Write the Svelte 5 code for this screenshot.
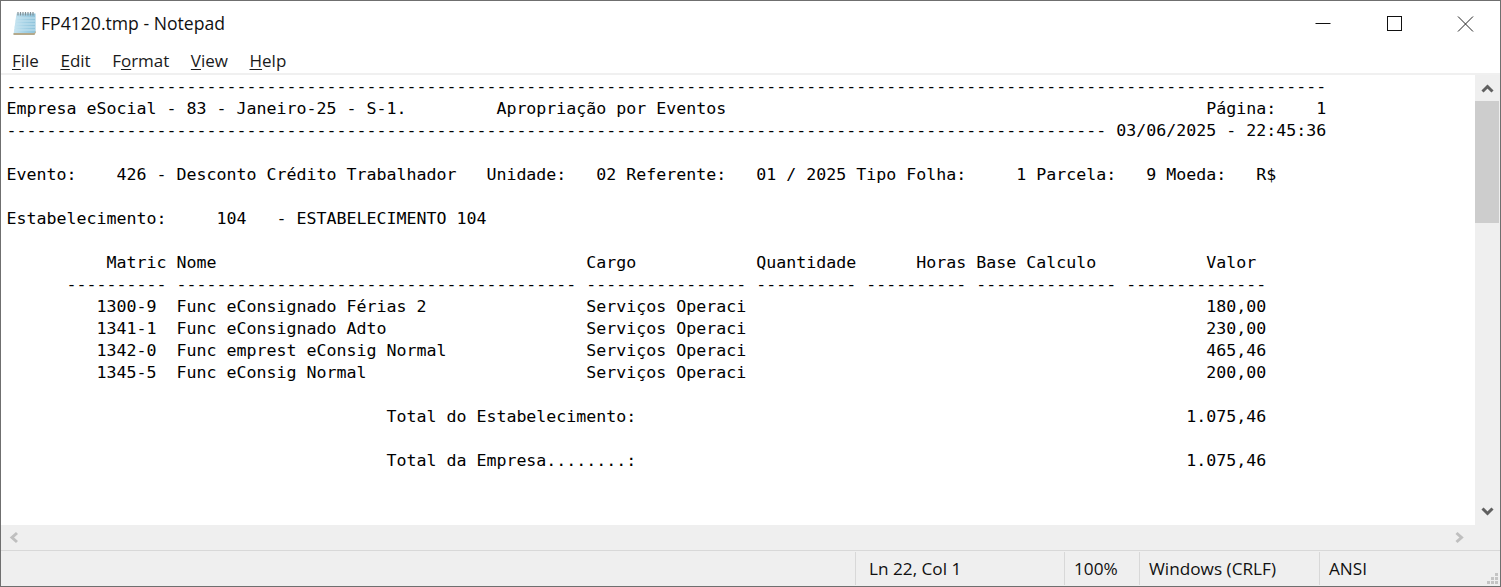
<script>
  const rep = (n) => '-'.repeat(n);
  const lines = [
    rep(132),
    'Empresa eSocial - 83 - Janeiro-25 - S-1.' + ' '.repeat(9) + 'Apropriação por Eventos' + ' '.repeat(48) + 'Página:    1',
    rep(110) + ' 03/06/2025 - 22:45:36',
    '',
    'Evento:    426 - Desconto Crédito Trabalhador   Unidade:   02 Referente:   01 / 2025 Tipo Folha:     1 Parcela:   9 Moeda:   R$',
    '',
    'Estabelecimento:     104   - ESTABELECIMENTO 104',
    '',
    '          Matric Nome' + ' '.repeat(37) + 'Cargo' + ' '.repeat(12) + 'Quantidade' + ' '.repeat(6) + 'Horas Base Calculo' + ' '.repeat(11) + 'Valor',
    '      ' + rep(10) + ' ' + rep(40) + ' ' + rep(16) + ' ' + rep(10) + ' ' + rep(10) + ' ' + rep(14) + ' ' + rep(14),
    '         1300-9  Func eConsignado Férias 2' + ' '.repeat(16) + 'Serviços Operaci' + ' '.repeat(46) + '180,00',
    '         1341-1  Func eConsignado Adto' + ' '.repeat(20) + 'Serviços Operaci' + ' '.repeat(46) + '230,00',
    '         1342-0  Func emprest eConsig Normal' + ' '.repeat(14) + 'Serviços Operaci' + ' '.repeat(46) + '465,46',
    '         1345-5  Func eConsig Normal' + ' '.repeat(22) + 'Serviços Operaci' + ' '.repeat(46) + '200,00',
    '',
    ' '.repeat(38) + 'Total do Estabelecimento:' + ' '.repeat(55) + '1.075,46',
    '',
    ' '.repeat(38) + 'Total da Empresa........:' + ' '.repeat(55) + '1.075,46'
  ];
  const text = lines.join('\n');
</script>

<div class="window">
  <header class="titlebar">
    <svg class="appicon" width="24" height="25" viewBox="0 0 24 25" aria-hidden="true">
      <defs>
        <linearGradient id="page" x1="0" y1="0" x2="1" y2="0">
          <stop offset="0" stop-color="#c9e6f2"/>
          <stop offset="0.5" stop-color="#a5d2e6"/>
          <stop offset="1" stop-color="#8dc2da"/>
        </linearGradient>
      </defs>
      <path d="M3.500 2.500 L22.500 2.500 L22.500 21 L21 23.500 L0.500 23.500 Z" fill="url(#page)"/>
      <path d="M3 7h19M2.500 10h19.500M2 13h20M1.600 16h20.400M1.200 19h20.800" stroke="#c6e3ef" stroke-width="1" fill="none"/>
      <path d="M0.500 22 L21.500 22 L22.500 20 L23 21 L21.500 24 L0.500 24 Z" fill="#b5a98b"/>
      <path d="M5 1v3.500M7.500 1v3.500M10 1v3.500M12.500 1v3.500M15 1v3.500M17.500 1v3.500M20 1v3.500" stroke="#7f8f96" stroke-width="1.200"/>
    </svg>
    <span class="title">FP4120.tmp - Notepad</span>
    <div class="controls">
      <svg class="ctl" width="46" height="16" viewBox="0 0 46 16"><path d="M15.500 7.500h15" stroke="#111" fill="none"/></svg>
      <svg class="ctl" width="46" height="16" viewBox="0 0 46 16"><rect x="16.500" y="0.500" width="14" height="14" stroke="#111" fill="none"/></svg>
      <svg class="ctl" width="46" height="16" viewBox="0 0 46 16"><path d="M16 0.500l15 15M31 0.500l-15 15" stroke="#222" fill="none"/></svg>
    </div>
  </header>

  <nav class="menu">
    <span class="mi"><u>F</u>ile</span>
    <span class="mi"><u>E</u>dit</span>
    <span class="mi">F<u>o</u>rmat</span>
    <span class="mi"><u>V</u>iew</span>
    <span class="mi"><u>H</u>elp</span>
  </nav>

  <div class="workspace">
    <div class="editor-row">
      <pre class="editor">{text}</pre>
      <div class="vscroll">
        <svg class="arrow" width="25" height="26" viewBox="0 0 25 26"><path d="M7.500 16.500l5-5 5 5" stroke="#606060" stroke-width="3" fill="none"/></svg>
        <div class="thumb"></div>
        <div class="spacer"></div>
        <svg class="arrow" width="25" height="26" viewBox="0 0 25 26"><path d="M7.500 9.500l5 5 5-5" stroke="#606060" stroke-width="3" fill="none"/></svg>
      </div>
    </div>
    <div class="hscroll">
      <svg width="24" height="25" viewBox="0 0 24 25"><path d="M16 8l-5 4.500 5 4.500" stroke="#bfbfbf" stroke-width="3" fill="none"/></svg>
      <svg class="right" width="24" height="25" viewBox="0 0 24 25"><path d="M10.500 8l5 4.500-5 4.500" stroke="#bfbfbf" stroke-width="3" fill="none"/></svg>
    </div>
  </div>

  <footer class="status">
    <div class="cell pos">Ln 22, Col 1</div>
    <div class="cell zoom">100%</div>
    <div class="cell eol">Windows (CRLF)</div>
    <div class="cell enc">ANSI</div>
    <svg class="grip" width="12" height="12" viewBox="0 0 12 12">
      <path d="M8 0h3v3H8zM4 4h3v3H4zM8 4h3v3H8zM0 8h3v3H0zM4 8h3v3H4zM8 8h3v3H8z" fill="#c4c4c4"/>
    </svg>
  </footer>
</div>

<style>
  :global(body) {
    margin: 0;
    background: #fff;
    overflow: hidden;
  }
  .window {
    width: 1501px;
    height: 587px;
    box-sizing: border-box;
    border: 1px solid #6f6f6f;
    display: flex;
    flex-direction: column;
    background: #fff;
    color: #000;
    font-family: "Open Sans", "Noto Sans", sans-serif;
  }
  .titlebar {
    height: 46px;
    display: flex;
    align-items: center;
    flex: none;
  }
  .appicon {
    margin-left: 12px;
    margin-top: -2px;
    flex: none;
  }
  .title {
    margin-left: 4px;
    font-size: 17.6px;
    margin-top: -3px;
    color: #111;
  }
  .controls {
    margin-left: auto;
    display: flex;
    margin-right: 12px;
    gap: 25px;
    margin-top: -1px;
  }
  .menu {
    height: 26px;
    flex: none;
    display: flex;
    align-items: center;
    padding-left: 11px;
    gap: 21.500px;
    font-size: 17px;
    color: #1a1a1a;
  }
  .mi u {
    text-underline-offset: 2px;
  }
  .workspace {
    flex: 1;
    min-height: 0;
    display: flex;
    flex-direction: column;
    border-top: 2px solid #f0f0f0;
  }
  .editor-row {
    flex: 1;
    min-height: 0;
    display: flex;
  }
  .editor {
    flex: 1;
    margin: 0;
    padding: 1px 0 0 5.400px;
    font-family: "DejaVu Sans Mono", "Liberation Mono", monospace;
    font-size: 16.610px;
    line-height: 22px;
    color: #000;
    overflow: hidden;
    white-space: pre;
  }
  .vscroll {
    width: 25px;
    flex: none;
    background: #efefef;
    display: flex;
    flex-direction: column;
  }
  .arrow {
    flex: none;
    display: block;
  }
  .thumb {
    height: 122px;
    width: 24px;
    background: #cdcdcd;
    flex: none;
  }
  .spacer {
    flex: 1;
  }
  .hscroll {
    height: 25px;
    flex: none;
    background: #efefef;
    display: flex;
    justify-content: space-between;
    padding-right: 24px;
    box-sizing: border-box;
  }
  .hscroll .right {
    margin-right: 6px;
  }
  .status {
    height: 36px;
    flex: none;
    background: #efefef;
    border-top: 1px solid #d8d8d8;
    box-sizing: border-box;
    display: flex;
    justify-content: flex-end;
    position: relative;
    font-size: 17.200px;
    color: #111;
  }
  .cell {
    box-sizing: border-box;
    border-left: 1px solid #d8d8d8;
    margin-top: 1px;
    height: 33px;
    display: flex;
    align-items: center;
    padding-left: 9px;
  }
  .pos { width: 209px; padding-left: 13px; }
  .zoom { width: 75px; }
  .eol { width: 180px; }
  .enc { width: 181px; }
  .grip {
    position: absolute;
    right: 1px;
    bottom: 1px;
  }
</style>
